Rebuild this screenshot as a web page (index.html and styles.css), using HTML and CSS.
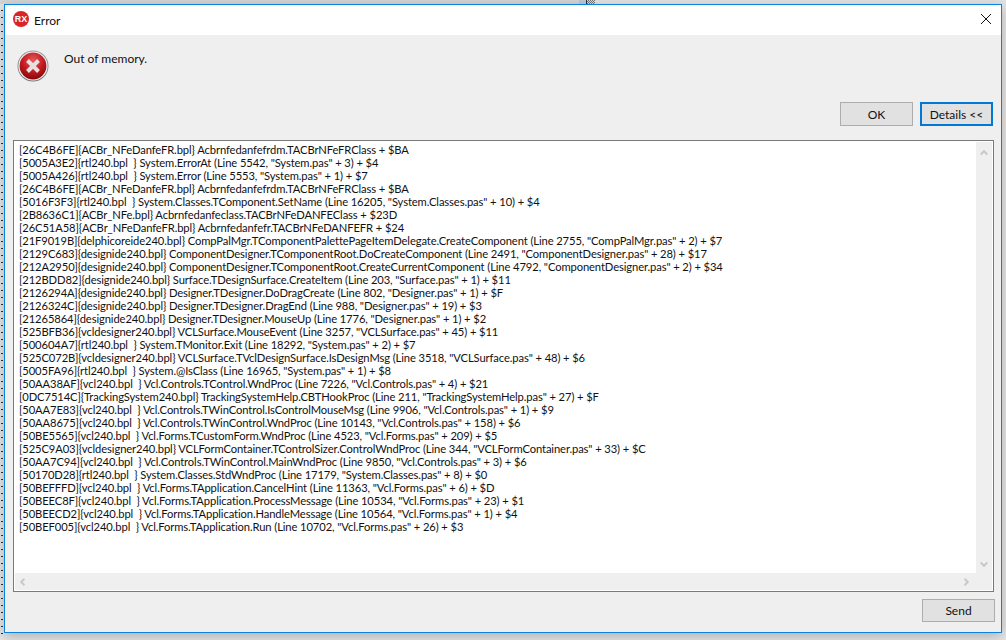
FILE: index.html
```html
<!DOCTYPE html>
<html lang="en">
<head>
<meta charset="utf-8">
<title>Error</title>
<link rel="stylesheet" href="styles.css">
</head>
<body>
<div class="desktop">
  <div class="backstrip"><span class="strip-a"></span><span class="strip-b"></span><span class="strip-c"></span></div>
  <div class="dots"></div>
  <section class="window">
    <header class="titlebar">
      <svg class="rx" viewBox="0 0 16 16" width="16" height="16"><circle cx="8" cy="8" r="8" fill="#d9252a"/><text x="8" y="11.2" text-anchor="middle" class="rx-text">RX</text></svg>
      <span class="title">Error</span>
      <svg class="close" viewBox="0 0 10 10" width="10" height="10"><path d="M0 0L10 10M10 0L0 10" stroke="#111" stroke-width="1" fill="none"/></svg>
    </header>
    <div class="body">
      <div class="message">
        <svg class="erricon" viewBox="0 0 32 32" width="32" height="32">
          <defs>
            <radialGradient id="g" cx="50%" cy="30%" r="75%"><stop offset="0" stop-color="#e8585a"/><stop offset=".55" stop-color="#c01a1e"/><stop offset="1" stop-color="#7d0508"/></radialGradient>
            <linearGradient id="r" x1="0" y1="0" x2="0" y2="1"><stop offset="0" stop-color="#9a9a9a"/><stop offset="1" stop-color="#777"/></linearGradient>
          </defs>
          <circle cx="16" cy="16" r="15.5" fill="url(#r)"/>
          <circle cx="16" cy="16" r="14.6" fill="#f2f2f2"/>
          <circle cx="16" cy="16" r="13.4" fill="url(#g)"/>
          <path d="M10.5 10.5L21.5 21.5M21.5 10.5L10.5 21.5" stroke="#e6e0e0" stroke-width="4" fill="none"/>
        </svg>
        <p class="msgtext">Out of memory.</p>
      </div>
      <div class="actions">
        <button class="btn">OK</button>
        <button class="btn btn-default">Details &lt;&lt;</button>
      </div>
      <div class="details">
        <div class="details-main">
          <pre class="log">[26C4B6FE]{ACBr_NFeDanfeFR.bpl} Acbrnfedanfefrdm.TACBrNFeFRClass + $BA
[5005A3E2]{rtl240.bpl  } System.ErrorAt (Line 5542, "System.pas" + 3) + $4
[5005A426]{rtl240.bpl  } System.Error (Line 5553, "System.pas" + 1) + $7
[26C4B6FE]{ACBr_NFeDanfeFR.bpl} Acbrnfedanfefrdm.TACBrNFeFRClass + $BA
[5016F3F3]{rtl240.bpl  } System.Classes.TComponent.SetName (Line 16205, "System.Classes.pas" + 10) + $4
[2B8636C1]{ACBr_NFe.bpl} Acbrnfedanfeclass.TACBrNFeDANFEClass + $23D
[26C51A58]{ACBr_NFeDanfeFR.bpl} Acbrnfedanfefr.TACBrNFeDANFEFR + $24
[21F9019B]{delphicoreide240.bpl} CompPalMgr.TComponentPalettePageItemDelegate.CreateComponent (Line 2755, "CompPalMgr.pas" + 2) + $7
[2129C683]{designide240.bpl} ComponentDesigner.TComponentRoot.DoCreateComponent (Line 2491, "ComponentDesigner.pas" + 28) + $17
[212A2950]{designide240.bpl} ComponentDesigner.TComponentRoot.CreateCurrentComponent (Line 4792, "ComponentDesigner.pas" + 2) + $34
[212BDD82]{designide240.bpl} Surface.TDesignSurface.CreateItem (Line 203, "Surface.pas" + 1) + $11
[2126294A]{designide240.bpl} Designer.TDesigner.DoDragCreate (Line 802, "Designer.pas" + 1) + $F
[2126324C]{designide240.bpl} Designer.TDesigner.DragEnd (Line 988, "Designer.pas" + 19) + $3
[21265864]{designide240.bpl} Designer.TDesigner.MouseUp (Line 1776, "Designer.pas" + 1) + $2
[525BFB36]{vcldesigner240.bpl} VCLSurface.MouseEvent (Line 3257, "VCLSurface.pas" + 45) + $11
[500604A7]{rtl240.bpl  } System.TMonitor.Exit (Line 18292, "System.pas" + 2) + $7
[525C072B]{vcldesigner240.bpl} VCLSurface.TVclDesignSurface.IsDesignMsg (Line 3518, "VCLSurface.pas" + 48) + $6
[5005FA96]{rtl240.bpl  } System.@IsClass (Line 16965, "System.pas" + 1) + $8
[50AA38AF]{vcl240.bpl  } Vcl.Controls.TControl.WndProc (Line 7226, "Vcl.Controls.pas" + 4) + $21
[0DC7514C]{TrackingSystem240.bpl} TrackingSystemHelp.CBTHookProc (Line 211, "TrackingSystemHelp.pas" + 27) + $F
[50AA7E83]{vcl240.bpl  } Vcl.Controls.TWinControl.IsControlMouseMsg (Line 9906, "Vcl.Controls.pas" + 1) + $9
[50AA8675]{vcl240.bpl  } Vcl.Controls.TWinControl.WndProc (Line 10143, "Vcl.Controls.pas" + 158) + $6
[50BE5565]{vcl240.bpl  } Vcl.Forms.TCustomForm.WndProc (Line 4523, "Vcl.Forms.pas" + 209) + $5
[525C9A03]{vcldesigner240.bpl} VCLFormContainer.TControlSizer.ControlWndProc (Line 344, "VCLFormContainer.pas" + 33) + $C
[50AA7C94]{vcl240.bpl  } Vcl.Controls.TWinControl.MainWndProc (Line 9850, "Vcl.Controls.pas" + 3) + $6
[50170D28]{rtl240.bpl  } System.Classes.StdWndProc (Line 17179, "System.Classes.pas" + 8) + $0
[50BEFFFD]{vcl240.bpl  } Vcl.Forms.TApplication.CancelHint (Line 11363, "Vcl.Forms.pas" + 6) + $D
[50BEEC8F]{vcl240.bpl  } Vcl.Forms.TApplication.ProcessMessage (Line 10534, "Vcl.Forms.pas" + 23) + $1
[50BEECD2]{vcl240.bpl  } Vcl.Forms.TApplication.HandleMessage (Line 10564, "Vcl.Forms.pas" + 1) + $4
[50BEF005]{vcl240.bpl  } Vcl.Forms.TApplication.Run (Line 10702, "Vcl.Forms.pas" + 26) + $3</pre>
          <div class="vscroll">
            <svg viewBox="0 0 8 5" width="8" height="5"><path d="M0.7 4.5L4 1.2L7.3 4.5" stroke="#c8c8c8" stroke-width="2" fill="none"/></svg>
            <svg viewBox="0 0 8 5" width="8" height="5"><path d="M0.7 0.5L4 3.8L7.3 0.5" stroke="#c8c8c8" stroke-width="2" fill="none"/></svg>
          </div>
        </div>
        <div class="hscroll">
          <svg viewBox="0 0 5 8" width="5" height="8"><path d="M4.5 0.7L1.2 4L4.5 7.3" stroke="#c8c8c8" stroke-width="2" fill="none"/></svg>
          <svg viewBox="0 0 5 8" width="5" height="8"><path d="M0.5 0.7L3.8 4L0.5 7.3" stroke="#c8c8c8" stroke-width="2" fill="none"/></svg>
        </div>
      </div>
      <div class="footer"><button class="btn btn-send">Send</button></div>
    </div>
  </section>
</div>
</body>
</html>
```
FILE: styles.css
```css
* { box-sizing: border-box; }
html, body { margin: 0; padding: 0; width: 1006px; height: 640px; overflow: hidden; background: #e6e6e6; }
.desktop { position: relative; width: 1006px; height: 640px; font-family: "Lato", "Open Sans", sans-serif; color: #111; }
.backstrip { display: flex; height: 4px; background: #e4e4e4; }
.strip-a { width: 579px; background: #d6d6d6; }
.strip-b { width: 8px; background: #b9cbe0; border-right: 1px solid #333; }
.strip-c { width: 8px; background: repeating-conic-gradient(#777 0 25%, #ddd 0 50%) 0 0 / 2px 2px; }
.dots { position: absolute; left: 1px; top: 4px; width: 2px; height: 636px; background: repeating-linear-gradient(transparent 0 6px, #333 6px 7px); }
.window { position: absolute; left: 4px; top: 4px; width: 998px; height: 629px; border: 1px solid #0a84e0; background: #efefef; display: flex; flex-direction: column; box-shadow: 0 3px 12px rgba(0,0,0,.25); }
.titlebar { height: 30px; flex: none; background: #fff; display: flex; align-items: center; padding: 0 10px 2px 8px; }
.rx { flex: none; }
.rx-text { font: bold 9px "Liberation Sans", sans-serif; fill: #fff; }
.title { margin: 2px 0 0 5px; font-size: 12px; flex: 1; }
.close { flex: none; }
.body { flex: 1; display: flex; flex-direction: column; padding: 0 7px 0 8px; min-height: 0; }
.message { height: 67px; flex: none; display: flex; padding: 15px 0 0 4px; }
.erricon { flex: none; }
.msgtext { margin: 1px 0 0 15px; font-size: 12px; line-height: 16px; }
.actions { height: 38px; flex: none; display: flex; justify-content: flex-end; gap: 7px; padding: 0 1px 0 0; }
.btn { width: 73px; height: 24px; border: 1px solid #adadad; background: #e1e1e1; font: 12px "Lato", "Open Sans", sans-serif; color: #111; padding: 0; }
.btn-default { border: 2px solid #0078d7; }
.details { height: 452px; flex: none; border: 1px solid #7a7a7a; background: #fff; padding: 1px; display: flex; flex-direction: column; }
.details-main { flex: 1; display: flex; min-height: 0; }
.log { flex: 1; margin: 0; padding: 1px 0 0 4px; font: 11.2px/13px "Lato", "Open Sans", sans-serif; letter-spacing: -0.1px; color: #111; background: #fff; white-space: pre; overflow: hidden; }
.vscroll { width: 16px; flex: none; background: #efefef; display: flex; flex-direction: column; justify-content: space-between; align-items: center; padding: 8px 0 6px; }
.hscroll { height: 17px; flex: none; background: #efefef; display: flex; justify-content: space-between; align-items: center; padding: 0 23px 0 5px; }
.footer { flex: 1; display: flex; justify-content: flex-end; align-items: center; padding: 0 0 3px; margin-right: -1px; }
.btn-send { height: 23px; }
```
